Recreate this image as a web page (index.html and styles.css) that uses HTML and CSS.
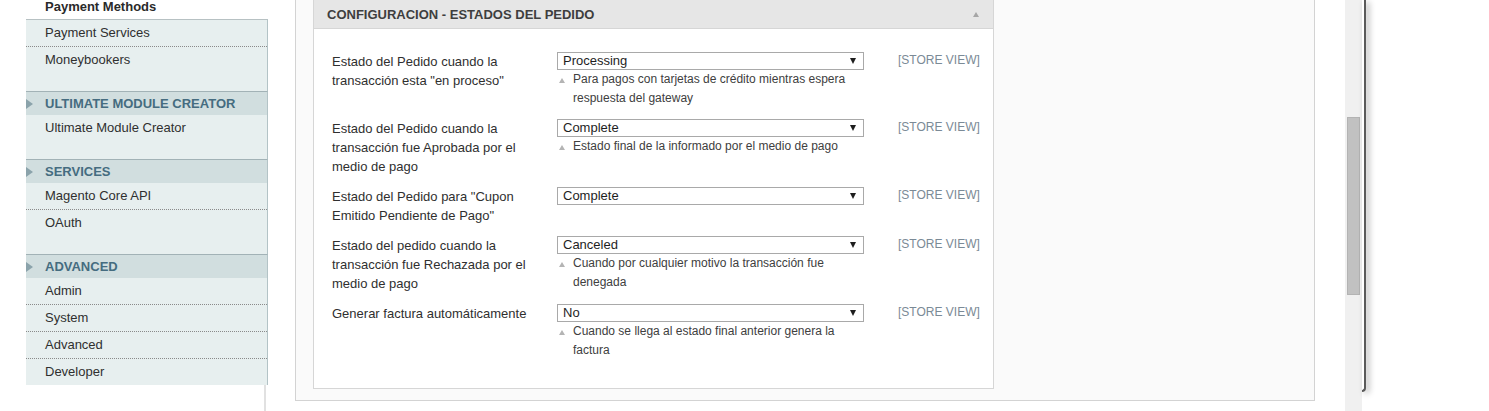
FILE: index.html
```html
<!DOCTYPE html>
<html lang="es">
<head>
<meta charset="utf-8">
<title>Configuración - Estados del pedido</title>
<link rel="stylesheet" href="styles.css">
</head>
<body>
<div class="page">
  <aside class="side">
    <div class="side-active">Payment Methods</div>
    <ul class="side-group first">
      <li>Payment Services</li>
      <li>Moneybookers</li>
    </ul>
    <div class="side-head"><span class="side-arrow"></span>Ultimate Module Creator</div>
    <ul class="side-group">
      <li>Ultimate Module Creator</li>
    </ul>
    <div class="side-head"><span class="side-arrow"></span>Services</div>
    <ul class="side-group">
      <li>Magento Core API</li>
      <li>OAuth</li>
    </ul>
    <div class="side-head"><span class="side-arrow"></span>Advanced</div>
    <ul class="side-group last">
      <li>Admin</li>
      <li>System</li>
      <li>Advanced</li>
      <li>Developer</li>
    </ul>
  </aside>

  <main class="main">
    <div class="outer">
      <section class="box">
        <div class="box-head">
          <span>CONFIGURACION - ESTADOS DEL PEDIDO</span>
          <span class="collapse"></span>
        </div>
        <div class="box-body">
          <div class="row">
            <div class="label">Estado del Pedido cuando la transacción esta "en proceso"</div>
            <div class="value">
              <div class="select"><span>Processing</span><span class="caret"></span></div>
              <div class="note"><span class="note-icon"></span><span>Para pagos con tarjetas de crédito mientras espera respuesta del gateway</span></div>
            </div>
            <div class="scope">[STORE VIEW]</div>
          </div>
          <div class="row">
            <div class="label">Estado del Pedido cuando la transacción fue Aprobada por el medio de pago</div>
            <div class="value">
              <div class="select"><span>Complete</span><span class="caret"></span></div>
              <div class="note"><span class="note-icon"></span><span>Estado final de la informado por el medio de pago</span></div>
            </div>
            <div class="scope">[STORE VIEW]</div>
          </div>
          <div class="row">
            <div class="label">Estado del Pedido para "Cupon Emitido Pendiente de Pago"</div>
            <div class="value">
              <div class="select"><span>Complete</span><span class="caret"></span></div>
            </div>
            <div class="scope">[STORE VIEW]</div>
          </div>
          <div class="row">
            <div class="label">Estado del pedido cuando la transacción fue Rechazada por el medio de pago</div>
            <div class="value">
              <div class="select"><span>Canceled</span><span class="caret"></span></div>
              <div class="note"><span class="note-icon"></span><span>Cuando por cualquier motivo la transacción fue denegada</span></div>
            </div>
            <div class="scope">[STORE VIEW]</div>
          </div>
          <div class="row">
            <div class="label">Generar factura automáticamente</div>
            <div class="value">
              <div class="select"><span>No</span><span class="caret"></span></div>
              <div class="note"><span class="note-icon"></span><span>Cuando se llega al estado final anterior genera la factura</span></div>
            </div>
            <div class="scope">[STORE VIEW]</div>
          </div>
        </div>
      </section>
    </div>
  </main>

  <div class="scrollbar"><div class="thumb"></div></div>
  <div class="edge"></div>
</div>
</body>
</html>
```

FILE: styles.css
```css
html, body {
  margin: 0;
  padding: 0;
  background: #fff;
}

body {
  font-family: "Liberation Sans", Arial, sans-serif;
  font-size: 13px;
  color: #2f2f2f;
  overflow: hidden;
}

.page {
  display: flex;
  align-items: flex-start;
  height: 411px;
  padding-left: 26px;
  overflow: hidden;
}

/* ---------- sidebar ---------- */
.side {
  flex: none;
  width: 242px;
  height: 411px;
  background: linear-gradient(to right, transparent 238px, #e1e1e1 238px, #e1e1e1 240px, transparent 240px);
}

.side-active {
  height: 19px;
  line-height: 13px;
  padding-left: 19px;
  font-weight: bold;
  background: #fff;
  color: #2a2a2a;
}

.side-group {
  list-style: none;
  margin: 0;
  padding: 0 0 18px;
  background: #e7efef;
  border-right: 1px solid #b3c3c6;
}

.side-group.first {
  border-top: 1px solid #b7c1c3;
}

.side-group.last {
  padding-bottom: 0;
}

.side-group li {
  height: 26px;
  line-height: 26px;
  padding-left: 19px;
  border-bottom: 1px dotted #8a8a8a;
}

.side-group li:last-child {
  border-bottom: none;
}

.side-head {
  display: flex;
  align-items: center;
  height: 23px;
  border-top: 1px solid #a2b2b6;
  border-right: 1px solid #b3c3c6;
  background: #d1dedf;
  color: #456c80;
  font-weight: bold;
  text-transform: uppercase;
}

.side-arrow {
  flex: none;
  width: 0;
  height: 0;
  border-left: 7px solid #8ba3ab;
  border-top: 5px solid transparent;
  border-bottom: 5px solid transparent;
  margin-right: 12px;
}

/* ---------- main ---------- */
.main {
  flex: none;
  margin-left: 27px;
}

.outer {
  box-sizing: border-box;
  width: 1020px;
  border: 1px solid #d3d3d3;
  border-top: none;
  background: #fafafa;
  padding: 0 0 11px 17px;
}

.box {
  box-sizing: border-box;
  width: 681px;
  border: 1px solid #d6d6d6;
  border-top: none;
  background: #fff;
}

.box-head {
  display: flex;
  align-items: center;
  justify-content: space-between;
  height: 28px;
  padding: 0 14px 0 13px;
  background: #e6e6e6;
  border-bottom: 1px solid #d6d6d6;
  font-weight: bold;
  color: #3e3e3e;
}

.collapse {
  width: 0;
  height: 0;
  border-left: 3px solid transparent;
  border-right: 3px solid transparent;
  border-bottom: 5px solid #a6a6a6;
}

.box-body {
  display: flex;
  flex-direction: column;
  gap: 11px;
  padding: 23px 0 28px 18px;
}

.row {
  display: grid;
  grid-template-columns: 225px 307px 1fr;
  align-items: start;
}

.label {
  padding-right: 20px;
  line-height: 19px;
  color: #2f2f2f;
}

.select {
  box-sizing: border-box;
  display: flex;
  align-items: center;
  justify-content: space-between;
  height: 18px;
  padding: 0 7px 0 5px;
  border: 1px solid #a9a9a9;
  background: #fff;
  color: #1e1e1e;
  line-height: 16px;
}

.caret {
  width: 0;
  height: 0;
  border-left: 3px solid transparent;
  border-right: 3px solid transparent;
  border-top: 6px solid #1e1e1e;
}

.note {
  display: flex;
  font-size: 12px;
  line-height: 19px;
  color: #404040;
}

.note-icon {
  flex: none;
  width: 0;
  height: 0;
  margin: 8px 8px 0 2px;
  border-left: 3px solid transparent;
  border-right: 3px solid transparent;
  border-bottom: 5px solid #b4b4b4;
}

.scope {
  padding-left: 34px;
  font-size: 12px;
  line-height: 16px;
  color: #7b8a96;
}

/* ---------- window scrollbar & edge ---------- */
.scrollbar {
  flex: none;
  width: 17px;
  height: 411px;
  margin-left: 30px;
  background: #f0f0f0;
}

.thumb {
  box-sizing: border-box;
  height: 178px;
  margin: 117px 2px 0;
  background: #c1c1c1;
  border: 1px solid #b3b3b3;
}

.edge {
  flex: none;
  box-sizing: border-box;
  width: 4px;
  height: 392px;
  border-right: 2px solid #5a5a5a;
  border-bottom: 2px solid #5a5a5a;
  border-bottom-right-radius: 5px;
  box-shadow: 3px 2px 6px rgba(0, 0, 0, 0.3);
}
```
